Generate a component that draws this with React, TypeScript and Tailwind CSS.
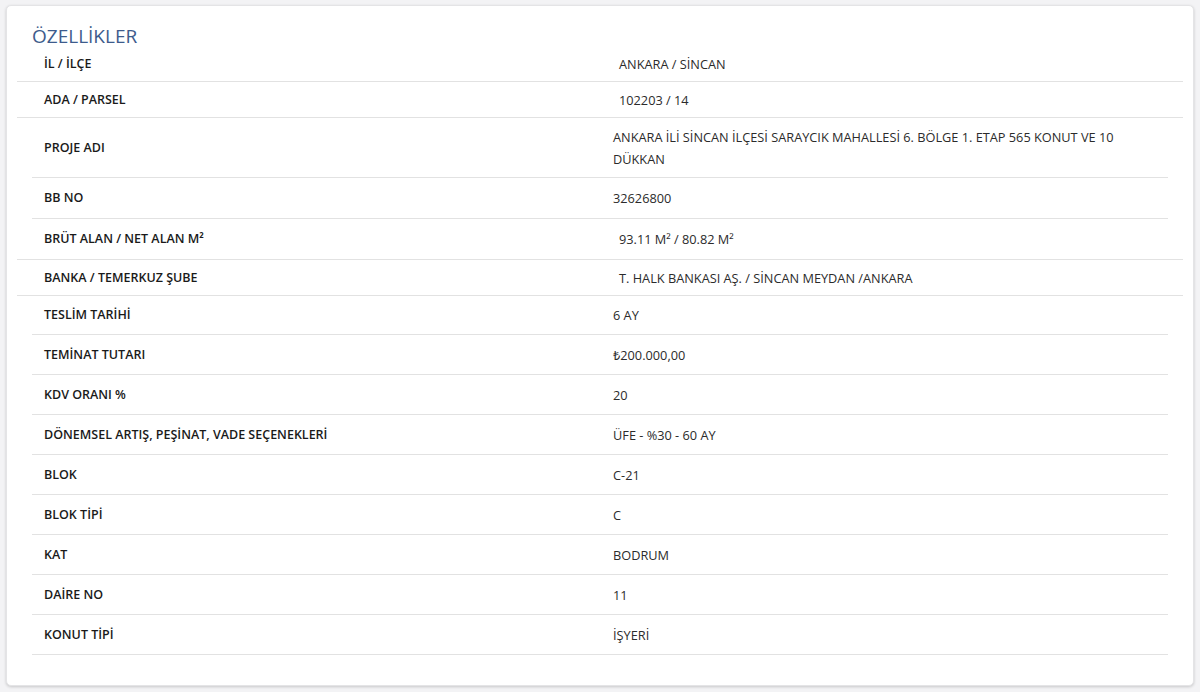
type Row = { label: string; value: string; outer?: boolean; h: string };

const rows: Row[] = [
  { label: "İL / İLÇE", value: "ANKARA / SİNCAN", outer: true, h: "h-[35px]" },
  { label: "ADA / PARSEL", value: "102203 / 14", outer: true, h: "h-[36px]" },
  {
    label: "PROJE ADI",
    value: "ANKARA İLİ SİNCAN İLÇESİ SARAYCIK MAHALLESİ 6. BÖLGE 1. ETAP 565 KONUT VE 10 DÜKKAN",
    h: "h-[60px]",
  },
  { label: "BB NO", value: "32626800", h: "h-[41px]" },
  { label: "BRÜT ALAN / NET ALAN M²", value: "93.11 M² / 80.82 M²", outer: true, h: "h-[41px]" },
  { label: "BANKA / TEMERKUZ ŞUBE", value: "T. HALK BANKASI AŞ. / SİNCAN MEYDAN /ANKARA", outer: true, h: "h-[36px]" },
  { label: "TESLİM TARİHİ", value: "6 AY", h: "h-[39px]" },
  { label: "TEMİNAT TUTARI", value: "₺200.000,00", h: "h-[40px]" },
  { label: "KDV ORANI %", value: "20", h: "h-[40px]" },
  { label: "DÖNEMSEL ARTIŞ, PEŞİNAT, VADE SEÇENEKLERİ", value: "ÜFE - %30 - 60 AY", h: "h-[40px]" },
  { label: "BLOK", value: "C-21", h: "h-[40px]" },
  { label: "BLOK TİPİ", value: "C", h: "h-[40px]" },
  { label: "KAT", value: "BODRUM", h: "h-[40px]" },
  { label: "DAİRE NO", value: "11", h: "h-[40px]" },
  { label: "KONUT TİPİ", value: "İŞYERİ", h: "h-[40px]" },
];

function FeatureRow({ row }: { row: Row }) {
  return (
    <div
      className={`flex items-center border-b border-[#e2e2e2] ${row.h} ${
        row.outer ? "mx-0" : "mx-[15px]"
      }`}
    >
      <div
        className={`shrink-0 text-[12.5px] leading-[22px] font-semibold text-[#1a1a1a] ${
          row.outer ? "w-[602px] pl-[27px]" : "w-[581px] pl-[12px]"
        }`}
      >
        {row.label}
      </div>
      <div className="flex-1 pr-3 text-[12.75px] leading-[22px] text-[#2b2b2b]">{row.value}</div>
    </div>
  );
}

export default function App() {
  return (
    <div className="h-[692px] w-[1200px] bg-[#f3f3f5] pl-[6px] pt-[5px] font-['Open_Sans','Noto_Sans',sans-serif]">
      <div className="h-[681px] w-[1188px] rounded-[5px] border border-[#e4e4e6] bg-white px-[10px] pt-[19px] shadow-[0_1px_3px_rgba(0,0,0,0.18)]">
        <h2 className="pl-[15px] text-[19px] leading-[22px] text-[#3d5b8c]">ÖZELLİKLER</h2>
        <div>
          {rows.map((r) => (
            <FeatureRow key={r.label} row={r} />
          ))}
        </div>
      </div>
    </div>
  );
}
